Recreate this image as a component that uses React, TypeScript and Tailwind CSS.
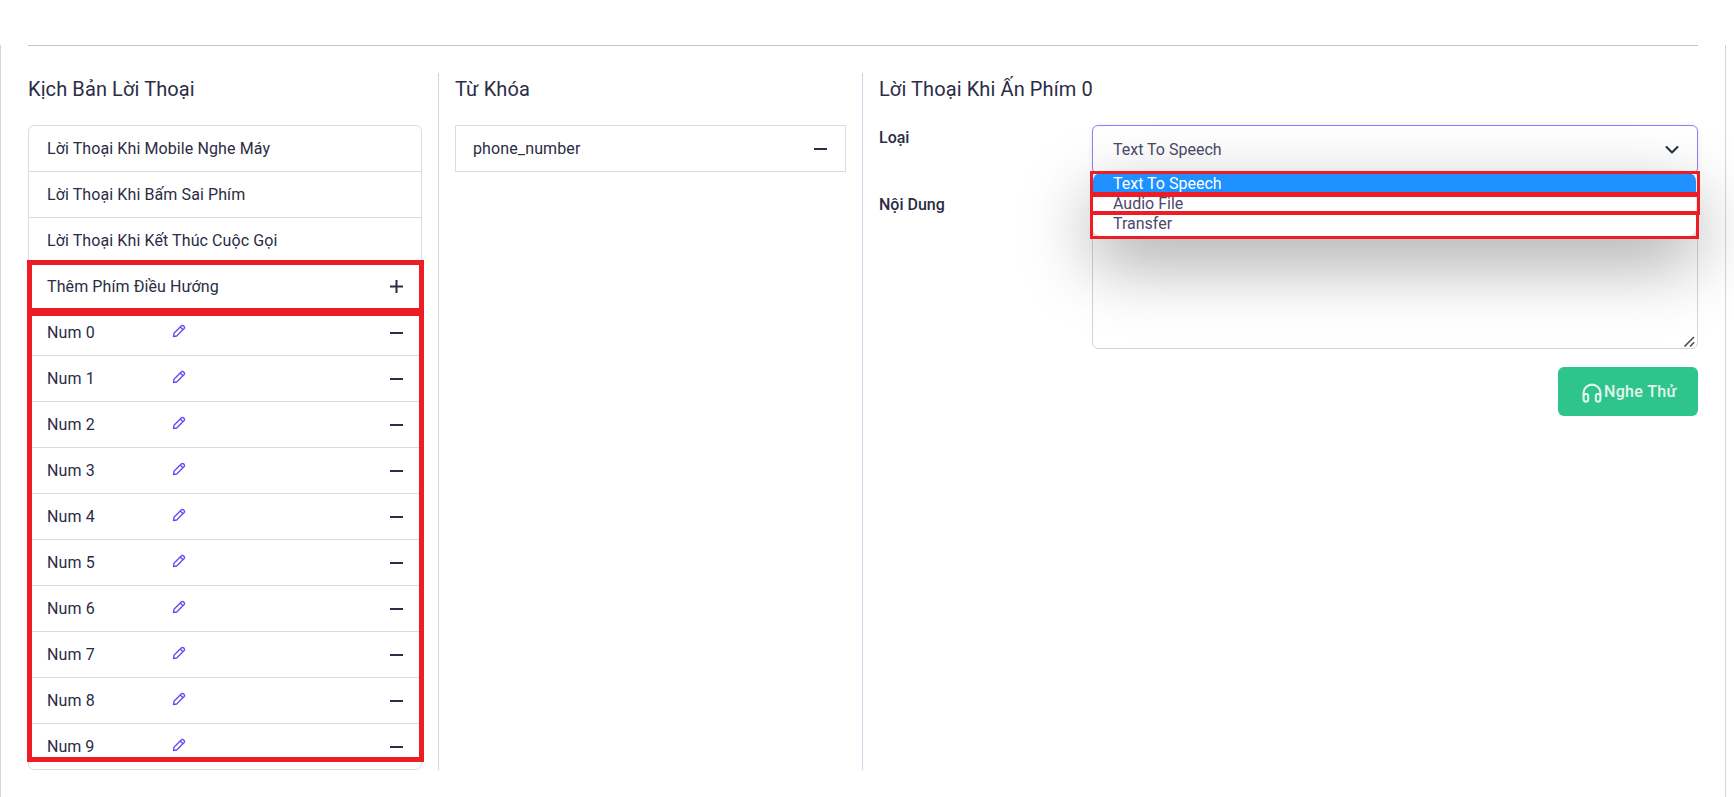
const Headphones = () => (
  <svg width="20" height="20" viewBox="0 0 20 20" fill="none" stroke="currentColor" strokeWidth="2.1" strokeLinejoin="round" className="shrink-0">
    <path d="M1.6 13V9.6a8.4 8 0 0 1 16.8 0V13" />
    <rect x="1.6" y="11" width="4.6" height="7.6" rx="2" />
    <rect x="13.8" y="11" width="4.6" height="7.6" rx="2" />
  </svg>
);
const Plus = () => (
  <svg width="13" height="13" viewBox="0 0 13 13" className="shrink-0">
    <path d="M0 6.5H13M6.5 0V13" stroke="#2b2c48" strokeWidth="2" />
  </svg>
);
const Minus = () => (
  <svg width="13" height="14" viewBox="0 0 13 14" className="shrink-0">
    <path d="M0 7H13" stroke="#2b2c48" strokeWidth="2" />
  </svg>
);
const Pencil = () => (
  <svg width="14" height="14" viewBox="0 0 14 14" fill="none" stroke="#6a4cf5" strokeWidth="1.4" strokeLinejoin="round" className="mb-[3px]">
    <path d="M1.5 12.5L2 9.3L9.2 2.1Q10.5 .9 11.9 2.1Q13.1 3.5 11.9 4.8L4.7 12L1.5 12.5ZM8.3 3.1L10.9 5.7" />
  </svg>
);

const scripts = ["Lời Thoại Khi Mobile Nghe Máy", "Lời Thoại Khi Bấm Sai Phím", "Lời Thoại Khi Kết Thúc Cuộc Gọi"];
const nums = [0, 1, 2, 3, 4, 5, 6, 7, 8, 9];
const row = "flex h-[46px] items-center border-b border-[#dcdcdf] pl-[18px] pr-[18px] tracking-[0.1px]";
const heading = "h-[52px] pt-[2px] text-[20px] leading-[28px] tracking-[0.1px]";

export default function App() {
  return (
    <div className="h-[797px] w-[1734px] overflow-hidden bg-white pt-[45px] font-['Roboto',sans-serif] text-base text-[#2b2c45]">
      <div className="h-[752px] w-[1726px] border-x border-[#d3d2e4] pl-[27px] pr-[27px]">
        <div className="h-px bg-[#c4c4c8]" />
        <div className="mt-[27px] flex h-[697px]">
          <section className="w-[411px] border-r border-[#d3d2e4] pr-4">
            <h2 className={heading}>Kịch Bản Lời Thoại</h2>
            <div className="relative h-[645px] w-[394px] rounded-[6px] border border-[#dcdcdf]">
              {scripts.map((s) => (
                <div key={s} className={row}>{s}</div>
              ))}
              <div className={row}>
                <span className="flex-1">Thêm Phím Điều Hướng</span>
                <Plus />
              </div>
              {nums.map((n) => (
                <div key={n} className={n === 9 ? "flex h-[45px] items-center pl-[18px] pr-[18px]" : row}>
                  <span className="w-[125px]">Num {n}</span>
                  <span className="flex-1"><Pencil /></span>
                  <Minus />
                </div>
              ))}
              <div className="absolute -left-[2px] top-[134px] h-[53px] w-[397px] border-[5px] border-[#ee1c24]" />
              <div className="absolute -left-[2px] top-[185px] h-[451px] w-[397px] border-[5px] border-[#ee1c24]" />
            </div>
          </section>
          <section className="w-[424px] border-r border-[#d3d2e4] pl-4">
            <h2 className={heading}>Từ Khóa</h2>
            <div className="flex h-[47px] w-[391px] items-center justify-between border border-[#dcdcdf] pl-[17px] pr-[18px] tracking-[0.12px]">
              <span>phone_number</span>
              <Minus />
            </div>
          </section>
          <section className="flex-1 pl-4">
            <h2 className={heading}>Lời Thoại Khi Ấn Phím 0</h2>
            <div className="flex">
              <div className="w-[213px] pt-px font-medium">
                <div className="h-[67px]">Loại</div>
                <div>Nội Dung</div>
              </div>
              <div className="relative w-[606px]">
                <div className="flex h-[49px] items-center justify-between rounded-[6px] border border-[#9181f4] pl-[20px] pr-[18px] text-[#4a4a6a] shadow-[0_0_4px_rgba(105,80,232,0.15)]">
                  <span>Text To Speech</span>
                  <svg width="14" height="14" viewBox="0 0 14 14" fill="none" stroke="#212b3b" strokeWidth="2" strokeLinecap="round" strokeLinejoin="round">
                    <path d="M1.5 4L7 9.5L12.5 4" />
                  </svg>
                </div>
                <div className="relative mt-[18px] h-[157px] rounded-[6px] border border-[#d3d2e4]">
                  <svg width="11" height="11" viewBox="0 0 11 11" className="absolute bottom-[1px] right-[2px]" stroke="#505050" strokeWidth="1.6">
                    <path d="M.5 10.5L10 1M6 10.5L10.2 6.3" />
                  </svg>
                </div>
                <div className="absolute left-px top-[48px] h-[63px] w-[603px] rounded-[8px] bg-white text-[#4a4a6a] shadow-[0_25px_70px_rgba(0,0,0,0.37)]">
                  <div className="h-[20px] rounded-t-[8px] bg-[#1e90ff] pl-[20px] leading-[22px] text-white">Text To Speech</div>
                  <div className="h-[20px] pl-[20px] leading-[22px]">Audio File</div>
                  <div className="h-[23px] pl-[20px] leading-[22px]">Transfer</div>
                  <div className="absolute -left-[3px] -top-[2px] h-[24px] w-[610px] border-[3px] border-[#ee1c24]" />
                  <div className="absolute -left-[3px] top-[21px] h-[21px] w-[610px] border-[3px] border-[#ee1c24]" />
                  <div className="absolute -left-[3px] top-[38px] h-[28px] w-[609px] border-[3px] border-[#ee1c24]" />
                </div>
                <div className="mt-[18px] flex justify-end">
                  <button className="flex h-[49px] w-[140px] items-center gap-[2px] rounded-[6px] bg-[#2dc58c] pl-[24px] font-medium tracking-[0.35px] text-[#e5f3ee]">
                    <span className="pt-[3px]"><Headphones /></span>
                    <span>Nghe Thử</span>
                  </button>
                </div>
              </div>
            </div>
          </section>
        </div>
      </div>
    </div>
  );
}
